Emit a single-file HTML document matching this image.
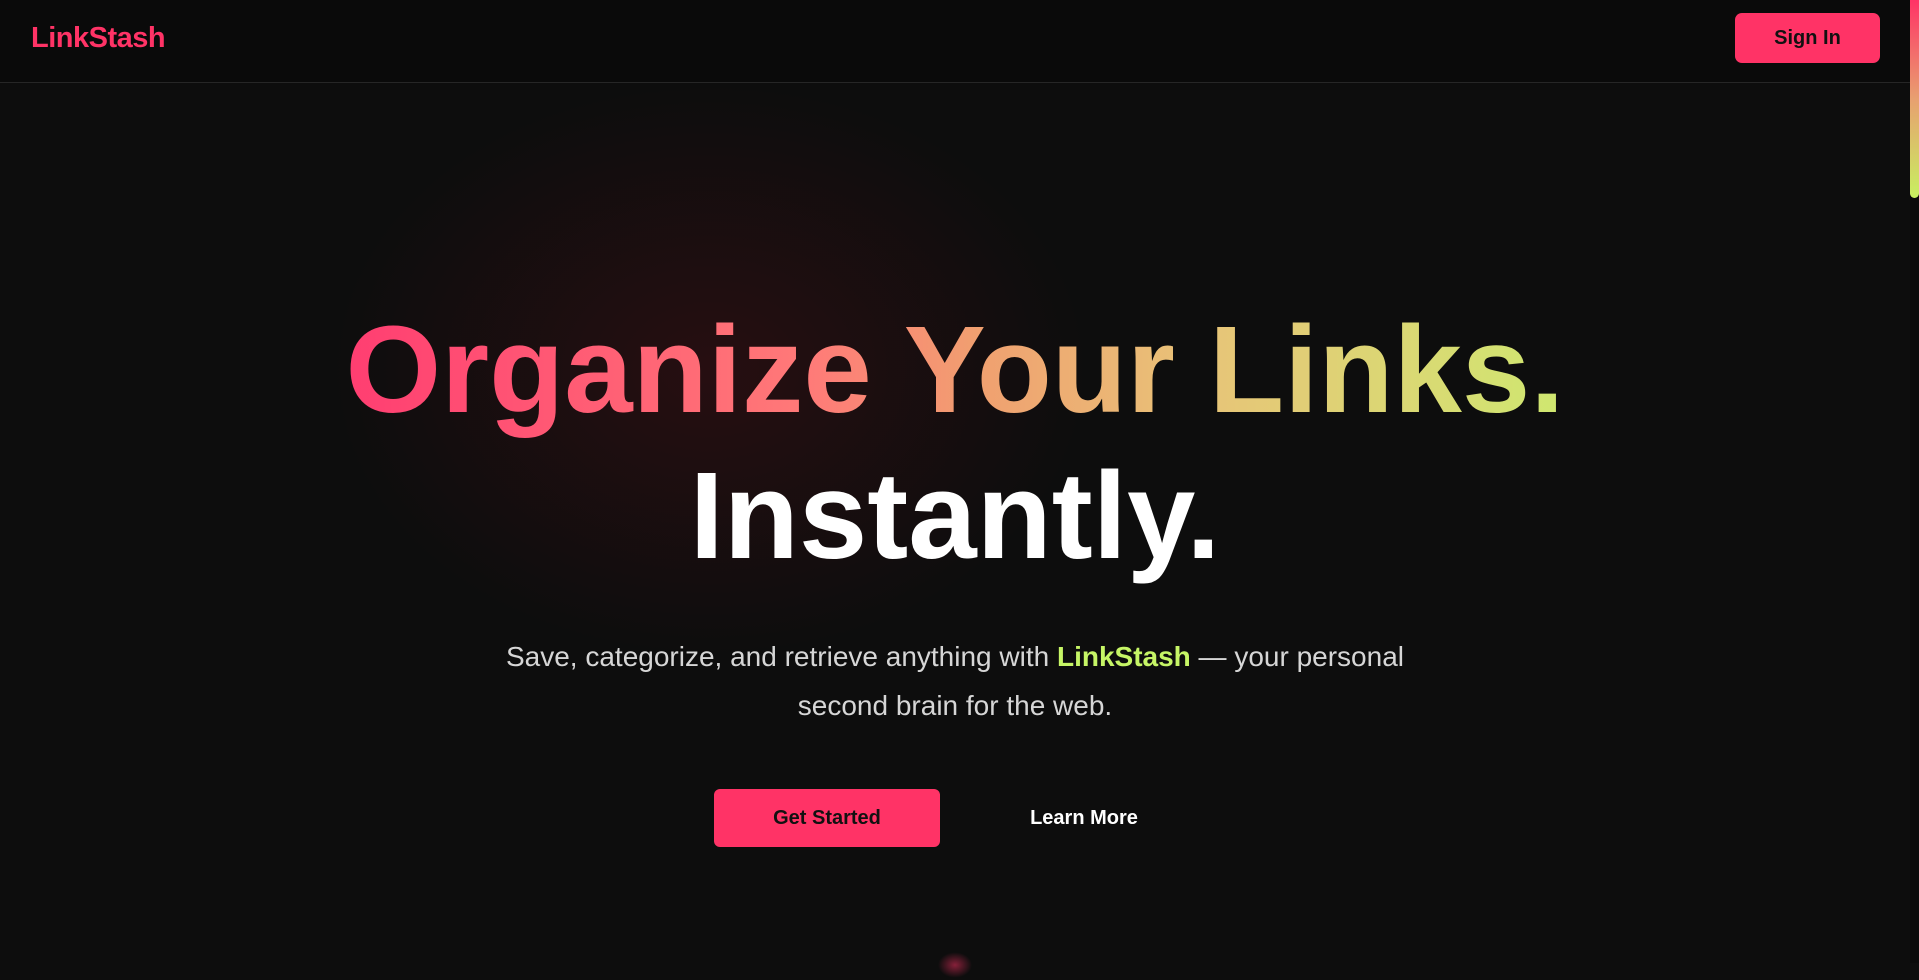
<!DOCTYPE html>
<html><head><meta charset="utf-8"><style>
*{margin:0;padding:0;box-sizing:border-box}
html,body{width:1919px;height:963px;overflow:hidden;background:#0d0d0d;font-family:"Liberation Sans",sans-serif}
.hdr{position:absolute;left:0;top:0;width:1910px;height:83px;background:#0a0a0a;border-bottom:1px solid #262626}
.logo{position:absolute;left:31px;top:22px;font-size:29px;font-weight:bold;color:#ff3366;letter-spacing:-0.5px}
.sign{position:absolute;left:1735px;top:13px;width:145px;height:50px;background:#ff3366;border-radius:7px;color:#111;font-weight:bold;font-size:20px;text-align:center;line-height:50px}
.sb{position:absolute;left:1910px;top:0;width:9px;height:963px;background:#0a0a0a}
.sb div{width:9px;height:198px;border-radius:0 0 5px 5px;background:linear-gradient(#ff3366,#e8a070,#c8f060)}
.glow{position:absolute;left:300px;top:60px;width:820px;height:620px;background:radial-gradient(ellipse at center,rgba(70,15,22,.45),rgba(13,13,13,0) 65%)}
.h1{position:absolute;left:0;width:1910px;text-align:center;font-weight:bold;font-size:123px;letter-spacing:0px}
.l1{top:300px}
.l1 span{background:linear-gradient(90deg,#ff3d71 0%,#ff7a78 38%,#f0a070 52%,#e8c478 70%,#cfe870 100%);-webkit-background-clip:text;background-clip:text;color:transparent;padding:0 4px}
.l2{top:446px;color:#fff}
.sub{position:absolute;left:0;width:1910px;top:632px;text-align:center;font-size:28px;line-height:49px;color:#d6d6d6;font-weight:300}
.sub b{color:#c6f566;font-weight:bold}
.gs{position:absolute;left:714px;top:789px;width:226px;height:58px;background:#ff3366;border-radius:6px;text-align:center;line-height:58px;font-weight:bold;font-size:20px;color:#111}
.lm{position:absolute;left:1000px;top:789px;width:168px;height:58px;text-align:center;line-height:58px;font-weight:bold;font-size:20px;color:#fff}
.dot{position:absolute;left:935px;top:950px;width:40px;height:30px;background:radial-gradient(ellipse at center,rgba(255,51,102,.5),rgba(0,0,0,0) 60%)}
</style></head><body>
<div class="glow"></div>
<div class="hdr"><div class="logo">LinkStash</div><div class="sign">Sign In</div></div>
<div class="sb"><div></div></div>
<div class="h1 l1"><span>Organize Your Links.</span></div>
<div class="h1 l2">Instantly.</div>
<div class="sub">Save, categorize, and retrieve anything with <b>LinkStash</b> — your personal<br>second brain for the web.</div>
<div class="gs">Get Started</div>
<div class="lm">Learn More</div>
<div class="dot"></div>
</body></html>
